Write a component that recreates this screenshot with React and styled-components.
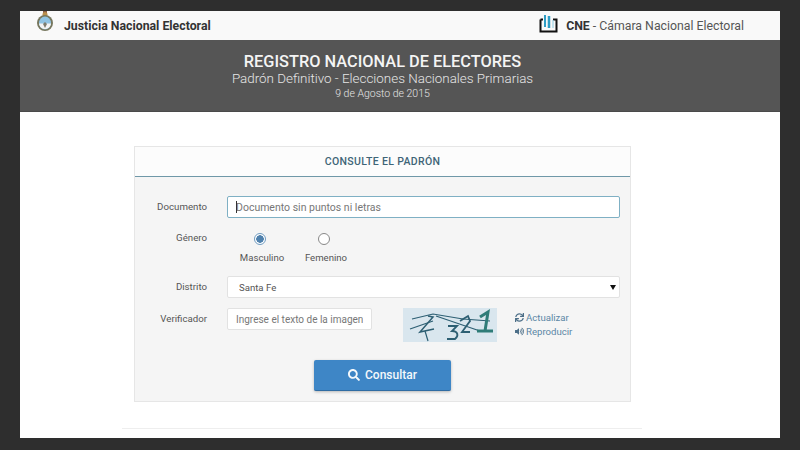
import React from 'react';
import styled, { createGlobalStyle } from 'styled-components';
import { FaSearch, FaSync, FaVolumeUp } from 'react-icons/fa';

const GlobalStyle = createGlobalStyle`
  html, body {
    margin: 0;
    height: 100%;
    background: #2e2e2e;
    font-family: Roboto, "Liberation Sans", sans-serif;
    overflow: hidden;
  }
`;

const Page = styled.div`
  width: 760px;
  height: 427px;
  margin: 11px 20px 12px;
  background: #fff;
  overflow: hidden;
`;

const TopBar = styled.header`
  height: 29px;
  background: #f9f9f9;
  display: flex;
  align-items: center;
  justify-content: space-between;
  padding: 0 36px 0 17px;
`;

const Brand = styled.div`
  display: flex;
  align-items: center;
  font-size: 12.3px;
  color: #333;
  gap: ${({ $gap }) => $gap}px;
  b { font-weight: 700; }
  span { color: #555; }
`;

const Band = styled.section`
  height: 72px;
  box-sizing: border-box;
  padding: 12px 35px 0 0;
  background: #555;
  border-bottom: 1px solid #4a4a4a;
  text-align: center;
  color: #e6e6e6;
`;

const Title = styled.h1`
  margin: 0;
  font-size: 16.35px;
  line-height: 20px;
  font-weight: 500;
  color: #f4f4f4;
`;

const Subtitle = styled.div`
  font-size: 13.4px;
  line-height: 15px;
  font-weight: 300;
  margin-top: -1px;
`;

const DateLine = styled.div`
  font-size: 10.5px;
  line-height: 14px;
  margin-top: 1px;
  font-weight: 300;
`;

const Card = styled.main`
  width: 497px;
  height: 256px;
  box-sizing: border-box;
  margin: 34px 0 0 114px;
  background: #f5f5f5;
  border: 1px solid #e6e6e6;
`;

const CardHeader = styled.div`
  height: 29px;
  background: #fcfcfc;
  border-bottom: 1px solid #6f98a8;
  text-align: center;
  font-size: 10.5px;
  font-weight: 500;
  line-height: 29px;
  letter-spacing: 0.35px;
  color: #3f6577;
`;

const Form = styled.form`
  padding: 19px 10px 0 0;
`;

const Row = styled.div`
  display: grid;
  grid-template-columns: 72px 1fr;
  column-gap: 20px;
  margin-bottom: ${({ $mb }) => $mb}px;
`;

const Label = styled.label`
  text-align: right;
  font-size: 9.7px;
  line-height: ${({ $lh }) => $lh || 22}px;
  color: #555;
`;

const CaretWrap = styled.div`
  position: relative;
  &::before {
    content: '';
    position: absolute;
    left: 9px;
    top: 5px;
    width: 1px;
    height: 12px;
    background: #333;
  }
`;

const TextInput = styled.input`
  display: block;
  box-sizing: border-box;
  width: ${({ $w }) => $w || '100%'};
  height: 22px;
  padding: 0 8px;
  border: 1px solid ${({ $focus }) => ($focus ? '#7fb0c4' : '#e2e2e2')};
  border-radius: 2px;
  background: #fff;
  font: ${({ $size }) => $size || 10.5}px Roboto, sans-serif;
  outline: none;
  &::placeholder { color: #777; opacity: 1; }
`;

const RadioGroup = styled.div`
  display: flex;
  padding: 2px 0 0 13px;
  gap: 20px;
`;

const RadioItem = styled.div`
  display: flex;
  flex-direction: column;
  align-items: center;
  width: 44px;
  gap: 7px;
  font-size: 9.6px;
  line-height: 12px;
  color: #555;
`;

const Radio = styled.span`
  box-sizing: border-box;
  width: 12px;
  height: 12px;
  margin-left: -4px;
  border-radius: 50%;
  background: ${({ $on }) => ($on ? 'radial-gradient(circle, #4f81ad 0 3.5px, #fff 4px)' : '#fff')};
  border: 1px solid ${({ $on }) => ($on ? '#6f9bc0' : '#888')};
`;

const SelectWrap = styled.div`
  position: relative;
  &::after {
    content: '';
    position: absolute;
    right: 4px;
    top: 9px;
    border-style: solid;
    border-width: 5px 3px 0;
    border-color: #111 transparent transparent;
  }
`;

const Select = styled.select`
  display: block;
  box-sizing: border-box;
  width: 100%;
  height: 22px;
  padding: 0 11px;
  appearance: none;
  border: 1px solid #e2e2e2;
  border-radius: 2px;
  background: #fff;
  font: 9.6px Roboto, sans-serif;
  color: #555;
  outline: none;
`;

const VerifierRow = styled.div`
  display: flex;
  align-items: flex-start;
`;

const Captcha = styled.svg`
  display: block;
  margin-left: 31px;
  flex: none;
`;

const Links = styled.div`
  margin: 3px 0 0 18px;
  display: flex;
  flex-direction: column;
  gap: 1px;
`;

const ActionLink = styled.a`
  display: flex;
  align-items: center;
  gap: 2px;
  font-size: 9.6px;
  line-height: 13px;
  color: #5b87a6;
  svg { width: 9px; height: 9px; color: #4d6f88; }
`;

const Actions = styled.div`
  display: flex;
  justify-content: center;
`;

const SubmitButton = styled.button`
  width: 137px;
  height: 31px;
  margin-left: 10px;
  border: none;
  border-bottom: 1px solid #2f6ca3;
  border-radius: 2px;
  background: #3e86c6;
  box-shadow: 0 1px 3px rgba(0, 0, 0, 0.25);
  color: #f4f8fb;
  font: 500 12px Roboto, sans-serif;
  display: flex;
  align-items: center;
  justify-content: center;
  gap: 5px;
  svg { width: 12px; height: 12px; }
`;

const FooterRule = styled.hr`
  width: 520px;
  height: 1px;
  margin: 26px 0 0 102px;
  border: none;
  background: #eee;
`;

const LogoSvg = styled.svg`
  display: block;
  flex: none;
  margin-top: ${({ $top }) => $top}px;
`;

const CoatOfArms = () => (
  <LogoSvg $top={-9} width="16" height="20" viewBox="0 0 16 20">
    <rect x="6" y="0" width="4" height="4" fill="#8a5f48" />
    <circle cx="8" cy="3.500" r="2.500" fill="#b98f4e" />
    <ellipse cx="8" cy="12" rx="8" ry="8" fill="#77775e" />
    <ellipse cx="8" cy="12" rx="6" ry="6.500" fill="#8fc3e3" />
    <path d="M2 12.500h12c-.3 3.300-2.900 5.500-6 5.500s-5.700-2.200-6-5.500z" fill="#f4f4f4" />
    <path d="M6 13l2-2 2 2-2 4z" fill="#7d7d70" />
  </LogoSvg>
);

const CneLogo = () => (
  <LogoSvg $top={-5} width="19" height="19" viewBox="0 0 19 19">
    <path d="M1.500 5.500V17.500H17.500V5.500H14" fill="none" stroke="#111" strokeWidth="2" />
    <path d="M1.500 5.500H4" fill="none" stroke="#111" strokeWidth="2" />
    <path d="M6 1v12" stroke="#2f9dc4" strokeWidth="2" />
    <path d="M10 2v12" stroke="#2f9dc4" strokeWidth="2.500" />
    <path d="M14 6v8" stroke="#8ccde4" strokeWidth="1" />
  </LogoSvg>
);

const CaptchaImage = () => (
  <Captcha width="94" height="34" viewBox="0 0 94 34">
    <rect width="94" height="34" fill="#d9e6ee" />
    <g fill="none" stroke="#2d5f73" strokeWidth="1.200">
      <path d="M9 11 L30 6 L60 11 L87 13" />
      <path d="M7 21 L30 13" />
      <path d="M33 8 L77 23" />
      <path d="M25 8 L30 9 L17 24 L31 21" strokeWidth="1.500" />
      <path d="M22 23 L25 33" />
      <path d="M45 18 L54 18 L49 23 C55 23 56 28 52 31 L44 31" strokeWidth="1.800" />
      <path d="M57 13 L65 8 L67 13 L59 24 L67 24" strokeWidth="1.800" />
    </g>
    <path d="M77 9 L85 4 L82 23 M74 23 L90 23" fill="none" stroke="#2f7c78" strokeWidth="3" />
  </Captcha>
);

export default function App() {
  return (
    <>
      <GlobalStyle />
      <Page>
        <TopBar>
          <Brand $gap={11}>
            <CoatOfArms />
            <b>Justicia Nacional Electoral</b>
          </Brand>
          <Brand $gap={8}>
            <CneLogo />
            <div>
              <b>CNE</b> <span>- Cámara Nacional Electoral</span>
            </div>
          </Brand>
        </TopBar>
        <Band>
          <Title>REGISTRO NACIONAL DE ELECTORES</Title>
          <Subtitle>Padrón Definitivo - Elecciones Nacionales Primarias</Subtitle>
          <DateLine>9 de Agosto de 2015</DateLine>
        </Band>
        <Card>
          <CardHeader>CONSULTE EL PADRÓN</CardHeader>
          <Form>
            <Row $mb={13}>
              <Label>Documento</Label>
              <CaretWrap>
                <TextInput $focus placeholder="Documento sin puntos ni letras" />
              </CaretWrap>
            </Row>
            <Row $mb={12}>
              <Label $lh={14}>Género</Label>
              <RadioGroup>
                <RadioItem>
                  <Radio $on />
                  Masculino
                </RadioItem>
                <RadioItem>
                  <Radio />
                  Femenino
                </RadioItem>
              </RadioGroup>
            </Row>
            <Row $mb={10}>
              <Label>Distrito</Label>
              <SelectWrap>
                <Select defaultValue="Santa Fe">
                  <option>Santa Fe</option>
                </Select>
              </SelectWrap>
            </Row>
            <Row $mb={18}>
              <Label>Verificador</Label>
              <VerifierRow>
                <TextInput $w="145px" $size={10} placeholder="Ingrese el texto de la imagen" />
                <CaptchaImage />
                <Links>
                  <ActionLink>
                    <FaSync /> Actualizar
                  </ActionLink>
                  <ActionLink>
                    <FaVolumeUp /> Reproducir
                  </ActionLink>
                </Links>
              </VerifierRow>
            </Row>
            <Actions>
              <SubmitButton type="button">
                <FaSearch /> Consultar
              </SubmitButton>
            </Actions>
          </Form>
        </Card>
        <FooterRule />
      </Page>
    </>
  );
}
